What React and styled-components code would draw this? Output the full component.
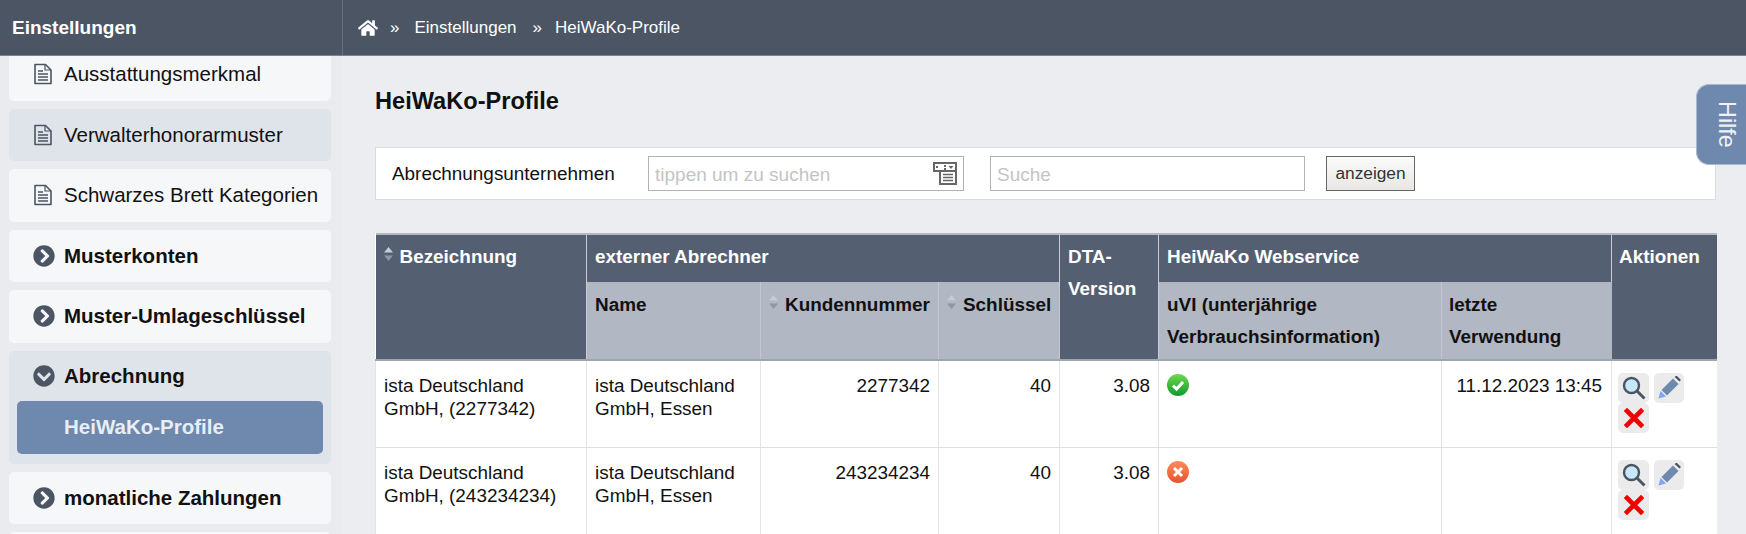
import React from "react";
import styled, { createGlobalStyle } from "styled-components";
import { FaHome, FaChevronCircleRight, FaChevronCircleDown } from "react-icons/fa";

const GlobalStyle = createGlobalStyle`
  html, body {
    margin: 0;
    height: 100%;
    overflow: hidden;
    background: #ebedf1;
    font-family: "Liberation Sans", Arial, sans-serif;
    color: #111;
  }
`;

const Page = styled.div`
  position: relative;
  width: 1746px;
  height: 534px;
  overflow: hidden;
  display: flex;
  flex-direction: column;
`;

const TopBar = styled.header`
  height: 55px;
  flex: none;
  display: flex;
  background: #4b5563;
  border-bottom: 1px solid #7b8390;
  color: #fff;
`;

const TopTitle = styled.div`
  width: 343px;
  padding-left: 12px;
  box-sizing: border-box;
  border-right: 1px solid #666f7d;
  display: flex;
  align-items: center;
  font-size: 19px;
  font-weight: 700;
`;

const Crumbs = styled.nav`
  display: flex;
  align-items: center;
  padding-left: 15px;
  font-size: 17px;
  svg {
    font-size: 20px;
    margin-right: 12px;
  }
`;

const Crumb = styled.span`
  margin-right: ${(p) => p.$gap || 0}px;
`;

const Body = styled.div`
  flex: 1;
  display: flex;
  min-height: 0;
`;

const Sidebar = styled.aside`
  width: 342px;
  flex: none;
  overflow: hidden;
  background: #e9ebee;
  padding: 0 11px 0 9px;
  box-sizing: border-box;
`;

const SideList = styled.div`
  display: flex;
  flex-direction: column;
  gap: 8px;
  margin-top: -8px;
`;

const SideItem = styled.div`
  height: ${(p) => (p.$open ? "113px" : "52.5px")};
  box-sizing: border-box;
  border-radius: 5px;
  background: ${(p) => (p.$alt ? "#dfe3ea" : "#f6f7f9")};
  flex: none;
`;

const SideRow = styled.div`
  height: ${(p) => (p.$open ? "50px" : "100%")};
  box-sizing: border-box;
  padding-top: ${(p) => (p.$open ? "1px" : "0")};
  display: flex;
  align-items: center;
  padding-left: 24px;
  gap: ${(p) => (p.$bold ? 9 : 11)}px;
  font-size: 20.5px;
  font-weight: ${(p) => (p.$bold ? 700 : 400)};
  white-space: nowrap;
  svg {
    flex: none;
    color: #4b5563;
  }
`;

const SubItem = styled.div`
  height: 53px;
  margin: 0 8px;
  padding-left: 47px;
  display: flex;
  align-items: center;
  border-radius: 5px;
  background: #6f88ad;
  color: #e8eef6;
  font-size: 20.5px;
  font-weight: 700;
`;

const Main = styled.main`
  flex: 1;
  min-width: 0;
  padding: 0 30px 0 33px;
`;

const Title = styled.h1`
  margin: 0;
  height: 91px;
  display: flex;
  align-items: center;
  font-size: 23.6px;
  font-weight: 700;
`;

const FilterBar = styled.div`
  height: 53px;
  box-sizing: border-box;
  display: flex;
  align-items: center;
  padding: 0 0 0 16px;
  background: #fff;
  border: 1px solid #d9dbdf;
  margin-bottom: 33px;
`;

const FilterLabel = styled.label`
  width: 256px;
  flex: none;
  font-size: 18.9px;
`;

const FieldBox = styled.div`
  position: relative;
  width: ${(p) => p.$w}px;
  height: 35px;
  margin-right: ${(p) => p.$mr}px;
  flex: none;
  svg {
    position: absolute;
    top: 6px;
    right: 7px;
  }
`;

const Field = styled.input`
  width: 100%;
  height: 100%;
  box-sizing: border-box;
  padding: 2px 6px 0;
  border: 1px solid #b3b3b3;
  background: #fff;
  font: 19px "Liberation Sans", Arial, sans-serif;
  &::placeholder {
    color: #c4c4c4;
    opacity: 1;
  }
`;

const ShowButton = styled.button`
  width: 89px;
  height: 35px;
  padding: 0;
  border: 1px solid #666;
  background: linear-gradient(#fbfbfb, #e9e7e5);
  color: #333;
  font: 17.3px "Liberation Sans", Arial, sans-serif;
`;

const Table = styled.table`
  width: 1341px;
  table-layout: fixed;
  border-collapse: collapse;
  background: #fff;
  font-size: 18.9px;
`;

const Head = styled.th`
  height: ${(p) => p.$h}px;
  box-sizing: border-box;
  padding: ${(p) => (p.$sub ? "7px 7px 0 8px" : "6px 7px 0 8px")};
  vertical-align: top;
  text-align: left;
  font-size: 18.9px;
  font-weight: 700;
  line-height: 32px;
  white-space: nowrap;
  color: ${(p) => (p.$sub ? "#111" : "#fff")};
  background: ${(p) => (p.$sub ? "#b1b7c3" : "#555f72")};
  border-right: 1px solid ${(p) => (p.$sub ? "#c2c7d0" : "#c8ccd3")};
  border-top: ${(p) => (p.$sub ? "none" : "2px solid #b4b7bd")};
  border-bottom: 2px solid #9ea4b0;
  &:last-child {
    border-right: none;
    padding-left: 7px;
  }
  ${(p) => p.$group && "border-bottom: none;"}
`;

const Row = styled.tr`
  height: ${(p) => p.$h}px;
`;

const Cell = styled.td`
  box-sizing: border-box;
  padding: 13px ${(p) => p.$pr || 8}px 0 8px;
  vertical-align: top;
  line-height: 23.4px;
  text-align: ${(p) => (p.$right ? "right" : "left")};
  border-right: 1px solid #e2e3e5;
  border-bottom: 1px solid #dddfe2;
  &:first-child {
    border-left: 1px solid #e2e3e5;
  }
  &:last-child {
    border-right: none;
    padding-left: 6px;
    padding-top: 12px;
  }
`;

const SortMark = styled.svg`
  width: 9px;
  height: 14px;
  margin-right: 7px;
  vertical-align: 2px;
`;

const Actions = styled.div`
  display: flex;
  flex-wrap: wrap;
  width: 70px;
  column-gap: 5px;
`;

const ActionButton = styled.button`
  width: ${(p) => p.$w || 31}px;
  height: 30px;
  padding: 0;
  border: 0;
  border-radius: 5px;
  background: #ebebeb;
  display: flex;
  align-items: center;
  justify-content: center;
`;

const HelpTab = styled.div`
  position: absolute;
  top: 84px;
  right: 0;
  width: 50px;
  height: 81px;
  box-sizing: border-box;
  padding-left: 9px;
  border: 1px solid #aab8ce;
  border-right: none;
  border-radius: 13px 0 0 13px;
  background: #6f88ad;
  color: #eef2f7;
  font-size: 23.4px;
  display: flex;
  align-items: center;
  justify-content: center;
  span {
    writing-mode: vertical-rl;
  }
`;

const DocIcon = () => (
  <svg width="20" height="22" viewBox="0 0 20 22" fill="none" stroke="#4b5563">
    <path d="M2 1.5h10.5L18 7v13.5H2z" strokeWidth="1.6" strokeLinejoin="round" />
    <path d="M12 1.5V7h6" strokeWidth="1.2" />
    <path d="M5 8h5M5 11h10M5 14h10M5 17h10" strokeWidth="1.3" />
  </svg>
);

const SortIcon = () => (
  <SortMark viewBox="0 0 9 14">
    <path d="M4.5 0 9 5.5H0z" fill="#c6cbd4" />
    <path d="M4.5 14 0 8.5h9z" fill="#8f97a6" />
  </SortMark>
);

const ListPickIcon = () => (
  <svg width="24" height="23" viewBox="0 0 24 23">
    <path d="M1 1h22v8H1z" fill="#fff" stroke="#666" strokeWidth="2" />
    <path d="M3 4h2v2H3zM11 3h2v2h-2zM11 6h2v2h-2z" fill="#666" />
    <path d="M15.500 4h5l-2.500 3z" fill="#666" />
    <path d="M7 9h16v13H7z" fill="#fff" stroke="#666" strokeWidth="2" />
    <path d="M10 12.500h10M10 15.500h10M10 18.500h10" stroke="#666" strokeWidth="1.500" />
  </svg>
);

const SearchIcon = () => (
  <svg width="24" height="24" viewBox="0 0 24 24">
    <circle cx="9.500" cy="9.500" r="7.500" fill="#c6e8f8" stroke="#4b5563" strokeWidth="2.400" />
    <path d="M15 15l7.500 7.500" stroke="#4b5563" strokeWidth="3" />
  </svg>
);

const PencilIcon = () => (
  <svg width="24" height="24" viewBox="0 0 24 24">
    <path d="M1.500 22.500 3.500 15l5.500 5.500z" fill="#7fa6ee" />
    <path d="M4.500 14 16 2.500 21.500 8 10 19.500z" fill="#6f88ad" />
    <path d="M17.500 1 19 0h1l3.500 3.500v1l-1 1z" fill="#4b5563" />
  </svg>
);

const CrossIcon = () => (
  <svg width="20" height="20" viewBox="0 0 20 20">
    <path d="M3 3l14 14M17 3 3 17" stroke="#f00000" strokeWidth="4.600" strokeLinecap="square" />
  </svg>
);

const StatusIcon = ({ ok }) => (
  <svg width="22" height="22" viewBox="0 0 22 22">
    <defs>
      <linearGradient id={ok ? "okFill" : "badFill"} x1="0" y1="0" x2="0" y2="1">
        <stop offset="0" stopColor={ok ? "#6fd84f" : "#ff8a5c"} />
        <stop offset="1" stopColor={ok ? "#0f9a2c" : "#e8532c"} />
      </linearGradient>
    </defs>
    <circle cx="11" cy="11" r="11" fill={`url(#${ok ? "okFill" : "badFill"})`} />
    {ok ? (
      <path d="M6 11.500l3.500 3.500L16 8" fill="none" stroke="#fff" strokeWidth="3" />
    ) : (
      <path d="M7 7l8 8M15 7l-8 8" fill="none" stroke="#fff" strokeWidth="3" />
    )}
  </svg>
);

const menu = [
  { label: "Ausstattungsmerkmal", icon: "doc" },
  { label: "Verwalterhonorarmuster", icon: "doc", alt: true },
  { label: "Schwarzes Brett Kategorien", icon: "doc" },
  { label: "Musterkonten" },
  { label: "Muster-Umlageschlüssel" },
];

const rows = [
  { bez: "ista Deutschland GmbH, (2277342)", nr: "2277342", ok: true, last: "11.12.2023 13:45" },
  { bez: "ista Deutschland GmbH, (243234234)", nr: "243234234", ok: false, last: "" },
];

function App() {
  return (
    <Page>
      <GlobalStyle />
      <TopBar>
        <TopTitle>Einstellungen</TopTitle>
        <Crumbs>
          <FaHome />
          <Crumb $gap={15}>»</Crumb>
          <Crumb $gap={16}>Einstellungen</Crumb>
          <Crumb $gap={13}>»</Crumb>
          <Crumb>HeiWaKo-Profile</Crumb>
        </Crumbs>
      </TopBar>
      <Body>
        <Sidebar>
          <SideList>
            {menu.map((m) => (
              <SideItem key={m.label} $alt={m.alt}>
                <SideRow $bold={!m.icon}>
                  {m.icon ? <DocIcon /> : <FaChevronCircleRight size={22} />}
                  {m.label}
                </SideRow>
              </SideItem>
            ))}
            <SideItem $alt $open>
              <SideRow $bold $open>
                <FaChevronCircleDown size={22} />
                Abrechnung
              </SideRow>
              <SubItem>HeiWaKo-Profile</SubItem>
            </SideItem>
            <SideItem>
              <SideRow $bold>
                <FaChevronCircleRight size={22} />
                monatliche Zahlungen
              </SideRow>
            </SideItem>
            <SideItem />
          </SideList>
        </Sidebar>
        <Main>
          <Title>HeiWaKo-Profile</Title>
          <FilterBar>
            <FilterLabel>Abrechnungsunternehmen</FilterLabel>
            <FieldBox $w={316} $mr={26}>
              <Field placeholder="tippen um zu suchen" />
              <ListPickIcon />
            </FieldBox>
            <FieldBox $w={315} $mr={21}>
              <Field placeholder="Suche" />
            </FieldBox>
            <ShowButton>anzeigen</ShowButton>
          </FilterBar>
          <Table>
            <colgroup>
              {[211, 174, 178, 121, 99, 283, 170, 105].map((w, i) => (
                <col key={i} style={{ width: w }} />
              ))}
            </colgroup>
            <thead>
              <tr>
                <Head $h={48} rowSpan={2}><SortIcon />Bezeichnung</Head>
                <Head $h={48} $group colSpan={3}>externer Abrechner</Head>
                <Head $h={48} rowSpan={2}>DTA-<br />Version</Head>
                <Head $h={48} $group colSpan={2}>HeiWaKo Webservice</Head>
                <Head $h={48} rowSpan={2}>Aktionen</Head>
              </tr>
              <tr>
                <Head $h={78} $sub>Name</Head>
                <Head $h={78} $sub><SortIcon />Kundennummer</Head>
                <Head $h={78} $sub><SortIcon />Schlüssel</Head>
                <Head $h={78} $sub>uVI (unterjährige<br />Verbrauchsinformation)</Head>
                <Head $h={78} $sub>letzte<br />Verwendung</Head>
              </tr>
            </thead>
            <tbody>
              {rows.map((r) => (
                <Row key={r.nr} $h={87}>
                  <Cell>{r.bez}</Cell>
                  <Cell>ista Deutschland GmbH, Essen</Cell>
                  <Cell $right>{r.nr}</Cell>
                  <Cell $right>40</Cell>
                  <Cell $right>3.08</Cell>
                  <Cell><StatusIcon ok={r.ok} /></Cell>
                  <Cell $right $pr={9}>{r.last}</Cell>
                  <Cell>
                    <Actions>
                      <ActionButton><SearchIcon /></ActionButton>
                      <ActionButton $w={30}><PencilIcon /></ActionButton>
                      <ActionButton><CrossIcon /></ActionButton>
                    </Actions>
                  </Cell>
                </Row>
              ))}
            </tbody>
          </Table>
        </Main>
      </Body>
      <HelpTab><span>Hilfe</span></HelpTab>
    </Page>
  );
}

export default App;
